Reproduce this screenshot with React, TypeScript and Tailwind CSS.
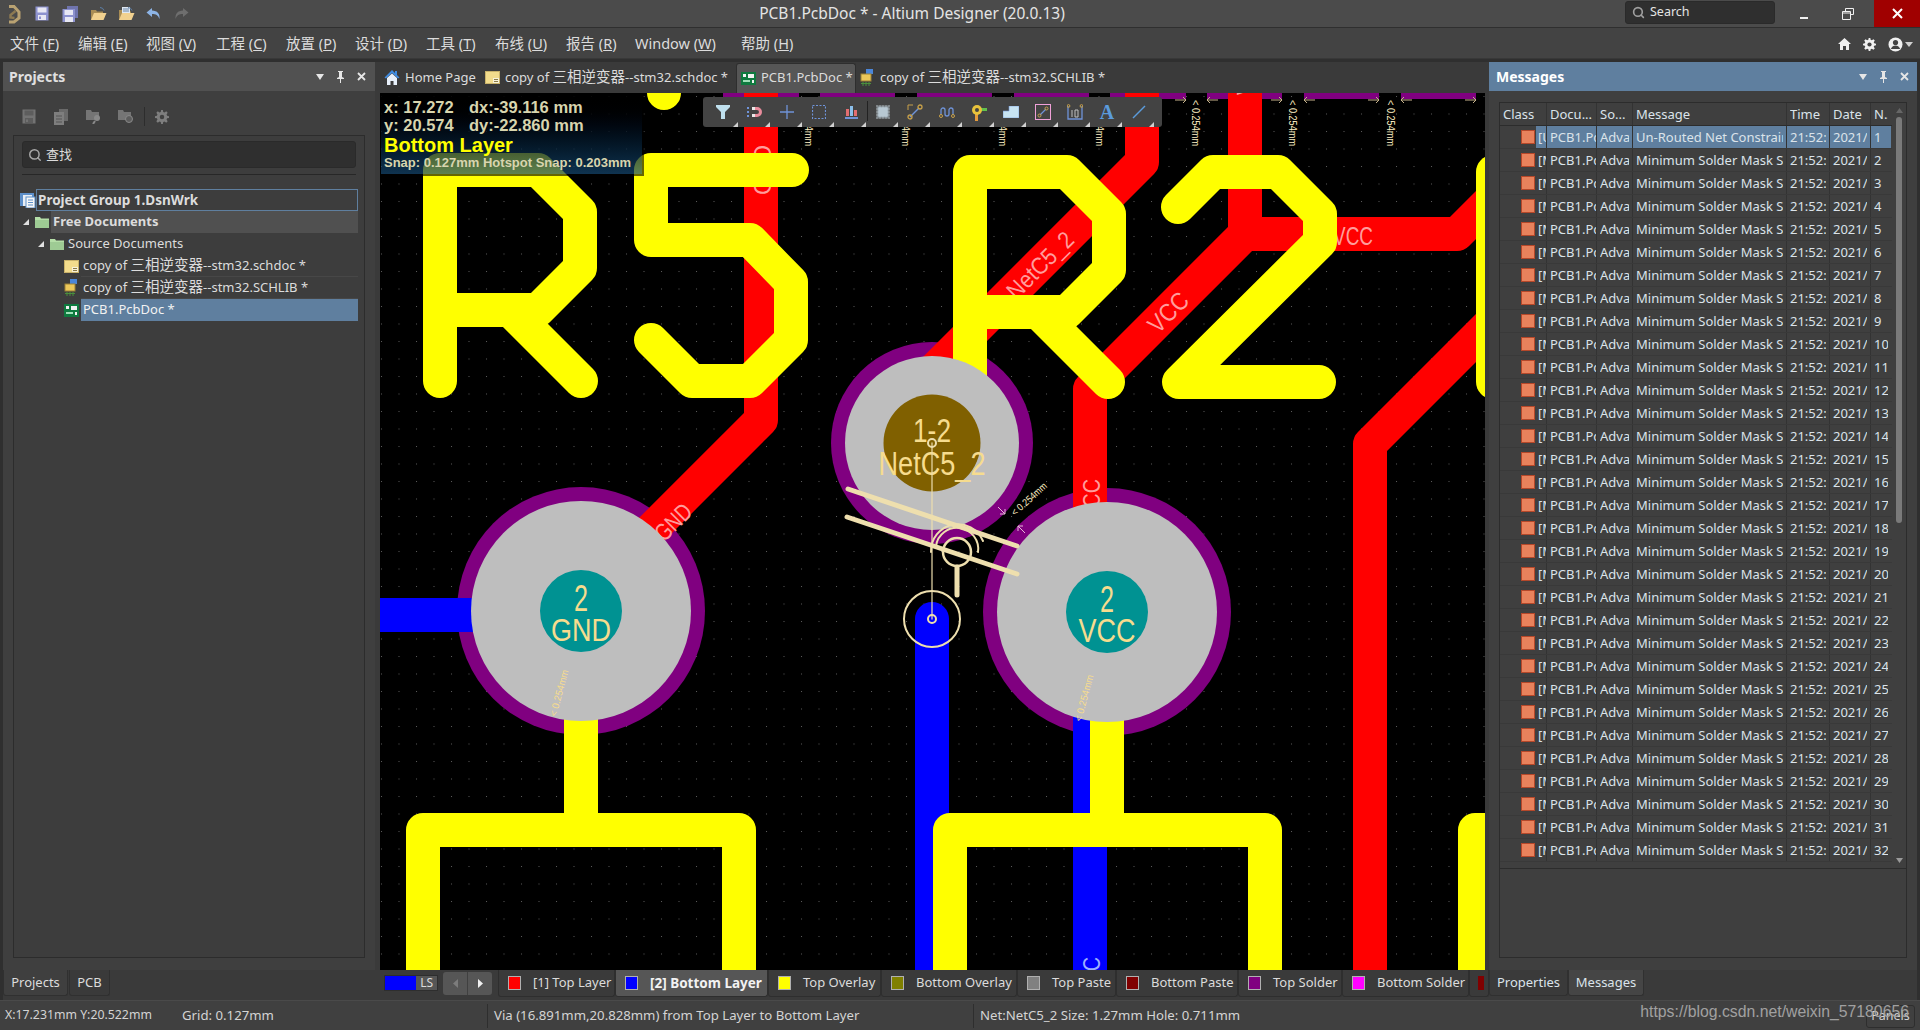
import { Search } from "lucide-react";
import type { ReactNode } from "react";

const UI_FONT = "font-['Noto_Sans','Noto_Sans_CJK_SC',sans-serif]";

function Floppy({ dim }: { dim?: boolean }) {
  const edge = dim ? "#8a8a8a" : "#8d92cf";
  const fill = dim ? "#6b6b6b" : "#e8e8f4";
  return (
    <svg width="14" height="15" viewBox="0 0 14 15">
      <rect x="0.5" y="0.5" width="13" height="14" fill={edge} />
      <rect x="2.5" y="1.5" width="9" height="5" fill={fill} />
      <rect x="3" y="9" width="8" height="5" fill={fill} />
      <rect x="4" y="10.5" width="2" height="2.5" fill={edge} />
    </svg>
  );
}

function FloppyStack() {
  return (
    <svg width="16" height="16" viewBox="0 0 16 16">
      <rect x="5" y="0" width="11" height="12" fill="#6f74ad" />
      <rect x="0.5" y="3" width="12.5" height="13" fill="#8d92cf" />
      <rect x="2.5" y="4" width="8.5" height="5" fill="#e8e8f4" />
      <rect x="3" y="11" width="8" height="5" fill="#e8e8f4" />
    </svg>
  );
}

function OpenFolder({ doc }: { doc?: boolean }) {
  return (
    <svg width="17" height="16" viewBox="0 0 17 16">
      <path d="M1 4h5l1 1.500h6V14H1z" fill="#a98d55" />
      {doc && <rect x="4" y="1" width="8" height="8" fill="#dfe8f2" />}
      {doc && <path d="M5 3h6M5 5h6" stroke="#6d87a8" />}
      <path d="M1 14l3-7h12.500l-3 7z" fill="#f1d18f" />
      <path d="M10 1.500q3 0 4 3" stroke="#5c7fa8" fill="none" />
    </svg>
  );
}

function HomeIcon() {
  return (
    <svg width="16" height="17" viewBox="0 0 16 17">
      <path d="M8 1L0.500 8.500 2 9.500 8 4l6 5.500 1.500-1z" fill="#3f8be0" />
      <path d="M3 9l5-4.500L13 9v7H9.500v-4h-3v4H3z" fill="#e8f0fa" />
      <rect x="11" y="2" width="2" height="4" fill="#3f8be0" />
    </svg>
  );
}

function SchDocIcon() {
  return (
    <svg width="15" height="13" viewBox="0 0 15 13">
      <rect x="0.500" y="0.500" width="14" height="12" fill="#f3dc8c" stroke="#c9b26a" />
      <rect x="8" y="7" width="6" height="5" fill="#f8f2d8" />
      <path d="M9 8.500h4M9 10.500h4" stroke="#8a7a48" />
    </svg>
  );
}

function SchLibIcon() {
  return (
    <svg width="15" height="18" viewBox="0 0 15 18">
      <rect x="6" y="0" width="7" height="5" fill="#4b86d8" />
      <rect x="1" y="5" width="10" height="7" fill="#ecc85a" stroke="#9c8236" />
      <path d="M3 13v4M6 13v4M9 13v4M1 14.500h10" stroke="#4a8f3c" />
    </svg>
  );
}

function PcbIcon() {
  return (
    <svg width="15" height="13" viewBox="0 0 15 13">
      <rect x="0" y="0" width="15" height="13" fill="#0f7a3f" />
      <rect x="2" y="2" width="3" height="3" fill="#f2f2f2" />
      <rect x="7" y="2" width="6" height="4" fill="#f2f2f2" />
      <rect x="2" y="8" width="7" height="2" fill="#9fe0b8" />
      <rect x="11" y="8" width="2" height="3" fill="#f2f2f2" />
    </svg>
  );
}

function FolderIcon() {
  return (
    <svg width="14" height="12" viewBox="0 0 14 12">
      <path d="M0 1h5l1 1.500h8V12H0z" fill="#b5dfa8" />
      <path d="M0 4h14v8H0z" fill="#9ecb94" />
    </svg>
  );
}

function GroupIcon() {
  return (
    <svg width="16" height="16" viewBox="0 0 16 16">
      <rect x="0" y="1" width="14" height="13" fill="#5d8fc9" />
      <rect x="3" y="3" width="9" height="11" fill="#e9eef5" />
      <rect x="6" y="5" width="9" height="11" fill="#f7f7f7" stroke="#5d8fc9" />
      <path d="M8 8h5M8 10.500h5M8 13h5" stroke="#5d8fc9" />
    </svg>
  );
}

function PinIcon() {
  return (
    <svg width="9" height="12" viewBox="0 0 9 12">
      <path d="M2 0h5v1H6v5l2 1v1H5v4H4V8H1V7l2-1V1H2z" fill="#e6e6e6" />
    </svg>
  );
}

function PanelButtons() {
  return (
    <div className="flex items-center gap-[12px] text-[#e6e6e6]">
      <svg width="8" height="6" viewBox="0 0 8 6">
        <path d="M0 0h8L4 6z" fill="#e6e6e6" />
      </svg>
      <PinIcon />
      <svg width="9" height="9" viewBox="0 0 9 9">
        <path d="M1 1l7 7M8 1l-7 7" stroke="#e6e6e6" strokeWidth="1.800" />
      </svg>
    </div>
  );
}

function GearIcon({ size, color }: { size: number; color: string }) {
  return (
    <svg width={size} height={size} viewBox="0 0 16 16">
      <path
        d="M7 0h2l.4 2.200 1.500.6L12.800 1.500l1.700 1.700-1.300 1.900.6 1.500L16 7v2l-2.200.4-.6 1.500 1.300 1.900-1.700 1.700-1.900-1.300-1.500.6L9 16H7l-.4-2.200-1.500-.6-1.900 1.300-1.700-1.700 1.300-1.900-.6-1.500L0 9V7l2.200-.4.6-1.500L1.500 3.200l1.700-1.700 1.900 1.300 1.500-.6z"
        fill={color}
      />
      <circle cx="8" cy="8" r="2.600" fill="#434343" />
    </svg>
  );
}

// the CJK part of a file name renders a little larger than the latin part
function Zh({ children }: { children: string }) {
  return <span className="text-[14.500px] leading-none">{children}</span>;
}

const MENU = [
  { zh: "文件", key: "F", cls: "w-[68px]" },
  { zh: "编辑", key: "E", cls: "w-[68px]" },
  { zh: "视图", key: "V", cls: "w-[70px]" },
  { zh: "工程", key: "C", cls: "w-[70px]" },
  { zh: "放置", key: "P", cls: "w-[69px]" },
  { zh: "设计", key: "D", cls: "w-[71px]" },
  { zh: "工具", key: "T", cls: "w-[69px]" },
  { zh: "布线", key: "U", cls: "w-[71px]" },
  { zh: "报告", key: "R", cls: "w-[69px]" },
  { zh: "Window", key: "W", cls: "w-[106px]" },
  { zh: "帮助", key: "H", cls: "w-[70px]" },
];

function TitleBar() {
  return (
    <div className="relative flex h-[28px] items-center border-b border-[#2f2f2f] bg-[#4b4b4b] text-[#e4e4e4]">
      <div className="flex items-center">
        <div className="flex w-[28px] justify-center">
          <svg width="14" height="20" viewBox="0 0 14 20" fill="none">
            <path d="M2 2.500h5l5 5.500v6l-5 4H2" stroke="#b9a272" strokeWidth="3" />
            <path d="M8.500 7L3.500 11v2.500l4 .5" stroke="#8d7a52" strokeWidth="2.500" />
          </svg>
        </div>
        <div className="flex w-[28px] justify-center"><Floppy /></div>
        <div className="flex w-[28px] justify-center"><FloppyStack /></div>
        <div className="flex w-[28px] justify-center"><OpenFolder /></div>
        <div className="flex w-[28px] justify-center"><OpenFolder doc /></div>
        <div className="flex w-[27px] justify-center">
          <svg width="16" height="14" viewBox="0 0 16 14">
            <path d="M6 1L0.500 5.500 6 10V7c4 0 6 1 7.500 5 .5-5-2-8.500-7.500-8.500z" fill="#8db4e6" />
          </svg>
        </div>
        <div className="flex w-[28px] justify-center">
          <svg width="16" height="14" viewBox="0 0 16 14">
            <path d="M10 1l5.500 4.500L10 10V7c-4 0-6 1-7.500 5C2 7 4.500 3.500 10 3.500z" fill="#6e6e6e" />
          </svg>
        </div>
      </div>
      <span className="absolute left-0 right-[96px] text-center text-[15.500px]">
        PCB1.PcbDoc * - Altium Designer (20.0.13)
      </span>
      <div className="relative ml-auto flex h-[27px] items-center">
        <div className="mr-[4px] flex h-[23px] w-[150px] -translate-y-[1px] items-center gap-[5px] rounded-[3px] border border-[#2a2a2a] bg-[#2f2f2f] pl-[6px] text-[12.500px]">
          <Search size={13} strokeWidth={3} className="text-[#a0a0a0]" />
          Search
        </div>
        <div className="flex w-[49px] justify-center">
          <div className="mt-[8px] h-[2px] w-[8px] bg-[#f0f0f0]" />
        </div>
        <div className="flex w-[40px] justify-center">
          <svg width="12" height="12" viewBox="0 0 12 12">
            <path d="M3.500 3V.5h8v6H9M.5 3.500h8v8h-8zM.5 5h8" stroke="#f0f0f0" fill="none" />
          </svg>
        </div>
        <div className="ml-[6px] flex h-[27px] w-[46px] items-center justify-center bg-[#a00000]">
          <svg width="11" height="11" viewBox="0 0 11 11">
            <path d="M1 1l9 9M10 1l-9 9" stroke="#fff" strokeWidth="2" />
          </svg>
        </div>
      </div>
    </div>
  );
}

function MenuBar() {
  return (
    <div className="flex h-[31px] items-center border-b border-[#383838] bg-[#434343] pl-[10px] pt-[2px] text-[14.500px] text-[#dcdcdc]">
      {MENU.map((m) => (
        <span key={m.key} className={`${m.cls} whitespace-nowrap`}>
          {m.zh} (<u>{m.key}</u>)
        </span>
      ))}
      <div className="ml-auto flex items-center gap-[12px] pr-[7px]">
        <svg width="13" height="12" viewBox="0 0 13 12">
          <path d="M6.500 0L0 6h2v6h3V8h3v4h3V6h2z" fill="#f0f0f0" />
        </svg>
        <GearIcon size={13} color="#f0f0f0" />
        <div className="flex items-center gap-[2px]">
          <svg width="15" height="15" viewBox="0 0 15 15">
            <circle cx="7.500" cy="7.500" r="7" fill="#f0f0f0" />
            <circle cx="7.500" cy="5.500" r="2.600" fill="#434343" />
            <path d="M2.800 12c1-2.500 2.800-3.500 4.700-3.500s3.700 1 4.700 3.500" fill="#434343" />
          </svg>
          <svg width="8" height="5" viewBox="0 0 8 5">
            <path d="M0 0h8L4 5z" fill="#d0d0d0" />
          </svg>
        </div>
      </div>
    </div>
  );
}

function TreeRow({
  icon,
  arrow,
  indent,
  children,
  cls,
}: {
  icon: ReactNode;
  arrow?: boolean;
  indent: string;
  children: ReactNode;
  cls: string;
}) {
  return (
    <div className={`flex h-[22px] items-center ${indent}`}>
      <div className="flex w-[12px] justify-center">
        {arrow && (
          <svg width="6" height="6" viewBox="0 0 6 6">
            <path d="M6 0v6H0z" fill="#e0e0e0" />
          </svg>
        )}
      </div>
      <div className="flex w-[19px] justify-center">{icon}</div>
      <div className={`flex h-[22px] flex-1 items-center whitespace-nowrap pl-[2px] ${cls}`}>
        {children}
      </div>
    </div>
  );
}

function ProjectsPanel() {
  return (
    <div className="flex h-full w-[375px] flex-col pl-[3px] text-[13px] text-[#dcdcdc]">
      <div className="flex h-[29px] items-center justify-between bg-[#515151] pl-[6px] pr-[9px]">
        <span className="text-[14px] font-bold text-[#e0e0e0]">Projects</span>
        <PanelButtons />
      </div>
      <div className="flex flex-1 flex-col bg-[#3f3f3f] px-[10px] pb-[12px]">
        <div className="flex h-[44px] items-center pl-[9px] pt-[7px] opacity-70">
          <div className="flex w-[32px]"><Floppy dim /></div>
          <div className="flex w-[32px]">
            <svg width="14" height="16" viewBox="0 0 14 16">
              <rect x="5" y="0" width="9" height="12" fill="#7d7d7d" />
              <rect x="0" y="3" width="10" height="13" fill="#9a9a9a" />
              <path d="M2 7h6M2 10h6M2 13h6" stroke="#5c5c5c" />
            </svg>
          </div>
          <div className="flex w-[32px]">
            <svg width="16" height="15" viewBox="0 0 16 15">
              <path d="M0 1h5l1 2h7v8H0z" fill="#8c8c8c" />
              <circle cx="11" cy="9" r="3" fill="#a9a9a9" />
              <path d="M9 12l-2 3" stroke="#a9a9a9" strokeWidth="2" />
            </svg>
          </div>
          <div className="flex w-[26px]">
            <svg width="16" height="15" viewBox="0 0 16 15">
              <path d="M0 1h5l1 2h7v8H0z" fill="#8c8c8c" />
              <circle cx="11" cy="10" r="3.500" fill="#6b6b6b" stroke="#a9a9a9" />
            </svg>
          </div>
          <div className="mr-[10px] h-[19px] w-px bg-[#262626]" />
          <GearIcon size={14} color="#9a9a9a" />
        </div>
        <div className="flex flex-1 flex-col border border-[#2c2c2c] bg-[#3d3d3d] px-[8px] pt-[5px]">
          <div className="flex h-[27px] items-center gap-[4px] rounded-[3px] border border-[#2a2a2a] bg-[#2f2f2f] pl-[5px]">
            <Search size={14} strokeWidth={2.500} className="text-[#a8a8a8]" />
            查找
          </div>
          <div className="mt-[6px] h-px bg-[#272727]" />
          <div className="-ml-[8px] mt-[14px] flex w-[344px] flex-col">
            <div className="flex h-[22px] items-center pl-[6px]">
              <GroupIcon />
              <div className="flex h-[22px] flex-1 items-center border border-[#5f7f9f] pl-[1px] text-[13.500px] font-bold">
                Project Group 1.DsnWrk
              </div>
            </div>
            <TreeRow arrow indent="pl-[6px]" icon={<FolderIcon />} cls="bg-[#505050] font-bold">
              Free Documents
            </TreeRow>
            <TreeRow arrow indent="pl-[21px]" icon={<FolderIcon />} cls="">
              Source Documents
            </TreeRow>
            <TreeRow indent="pl-[36px]" icon={<SchDocIcon />} cls="border-b border-[#474747]">
              <span>copy of <Zh>三相逆变器</Zh>--stm32.schdoc *</span>
            </TreeRow>
            <TreeRow indent="pl-[36px]" icon={<SchLibIcon />} cls="border-b border-[#474747]">
              <span>copy of <Zh>三相逆变器</Zh>--stm32.SCHLIB *</span>
            </TreeRow>
            <TreeRow indent="pl-[36px]" icon={<PcbIcon />} cls="bg-[#5f7f9f] text-[#f2f2f2]">
              PCB1.PcbDoc *
            </TreeRow>
          </div>
        </div>
      </div>
      <div className="flex h-[30px] bg-[#3a3a3a]">
        <div className="flex h-[26px] w-[65px] items-center justify-center rounded-b-[3px] border border-t-0 border-[#303030] bg-[#3f3f3f]">
          Projects
        </div>
        <div className="ml-px flex h-[26px] w-[41px] items-center justify-center rounded-b-[3px] border border-t-0 border-[#303030]">
          PCB
        </div>
      </div>
    </div>
  );
}

function DocTabs() {
  return (
    <div className="flex h-[31px] items-center pl-[9px] text-[13px] text-[#dcdcdc]">
      <div className="flex w-[101px] items-center gap-[5px]"><HomeIcon />Home Page</div>
      <div className="flex w-[251px] items-center gap-[5px] whitespace-nowrap">
        <SchDocIcon /><span>copy of <Zh>三相逆变器</Zh>--stm32.schdoc *</span>
      </div>
      <div className="flex h-[30px] w-[120px] items-center gap-[5px] rounded-t-[3px] border border-b-0 border-[#2e2e2e] bg-[#565656] pl-[4px] whitespace-nowrap">
        <PcbIcon />PCB1.PcbDoc *
      </div>
      <div className="ml-[4px] flex items-center gap-[5px] whitespace-nowrap">
        <SchLibIcon /><span>copy of <Zh>三相逆变器</Zh>--stm32.SCHLIB *</span>
      </div>
    </div>
  );
}

// purple pad strips along the top edge of the board
const TOP_PADS = [
  [723, 799],
  [820, 895],
  [917, 992],
  [1014, 1089],
  [1110, 1186],
  [1207, 1282],
  [1304, 1379],
  [1401, 1476],
];

function Squeezed({
  x,
  y,
  w,
  size,
  fill,
  rotate,
  children,
}: {
  x: number;
  y: number;
  w: number;
  size: number;
  fill: string;
  rotate?: number;
  children: string;
}) {
  return (
    <text
      x={x}
      y={y}
      fontSize={size}
      fill={fill}
      textAnchor="middle"
      dominantBaseline="central"
      textLength={w}
      lengthAdjust="spacingAndGlyphs"
      fontFamily="'Liberation Sans', sans-serif"
      transform={rotate ? `rotate(${rotate} ${x} ${y})` : undefined}
    >
      {children}
    </text>
  );
}

function Board() {
  const pink = "#ff9c9c";
  const cream = "#f6dc8e";
  const sel = "#eedfae";
  return (
    <svg viewBox="380 93 1105 877" className="absolute inset-0 h-full w-full">
      <defs>
        <pattern id="grid" x="381" y="96" width="17.500" height="17.500" patternUnits="userSpaceOnUse">
          <rect width="1" height="1" fill="#5c5c5c" />
        </pattern>
      </defs>
      <rect x="380" y="93" width="1105" height="877" fill="#000" />
      <rect x="380" y="93" width="1105" height="877" fill="url(#grid)" />

      {TOP_PADS.map(([s, e]) => (
        <rect key={s} x={s} y="93" width={e - s} height="6" fill="#800080" />
      ))}

      {/* pad masks */}
      <circle cx="581" cy="611" r="124" fill="#800080" />
      <circle cx="1107" cy="612" r="124" fill="#800080" />
      <circle cx="932" cy="443" r="101" fill="#800080" />

      {/* top layer */}
      <g fill="none" stroke="#ff0000" strokeWidth="34" strokeLinejoin="round" strokeLinecap="round">
        <path d="M761 80V420L640 541" />
        <path d="M1245 80V234L1090 389V520" />
        <path d="M1245 234H1457L1500 191" />
        <path d="M1142 80V162L932 372" />
        <path d="M1370 990V444L1500 314" />
      </g>
      <Squeezed x={673} y={522} w={42} size={24} fill={pink} rotate={-45}>GND</Squeezed>
      <Squeezed x={1168} y={312} w={46} size={25} fill={pink} rotate={-45}>VCC</Squeezed>
      <Squeezed x={1040} y={265} w={84} size={24} fill={pink} rotate={-45}>NetC5_2</Squeezed>
      <Squeezed x={1353} y={236} w={40} size={25} fill={pink}>VCC</Squeezed>
      <Squeezed x={1091} y={500} w={42} size={24} fill={pink} rotate={-90}>VCC</Squeezed>
      <Squeezed x={762} y={170} w={50} size={24} fill={pink} rotate={-90}>GND</Squeezed>
      <Squeezed x={1245} y={74} w={42} size={24} fill={pink} rotate={-90}>VCC</Squeezed>

      {/* bottom layer */}
      <g fill="none" stroke="#0000ff" strokeWidth="34" strokeLinejoin="round" strokeLinecap="round">
        <path d="M360 615H500" />
        <path d="M932 619V1000" />
        <path d="M1090 700V1000" />
      </g>
      <Squeezed x={1091} y={978} w={42} size={24} fill="#9db0ff" rotate={-90}>VCC</Squeezed>

      {/* overlay silkscreen */}
      <g fill="none" stroke="#ffff00" strokeWidth="34" strokeLinejoin="round" strokeLinecap="round">
        <circle cx="664" cy="93" r="8.500" strokeWidth="17" />
        <path d="M440 381V170H538L580 212V268L538 310H440M510 310L581 381" />
        <path d="M651 340L692 381H750L791 340V282L750 240H651V170H792" />
        <path d="M970 382V172H1067L1109 214V270L1067 312H970M1038 312L1108 382" />
        <path d="M1178 207L1213 172H1278L1320 214V242L1179 382H1319" />
        <path d="M1493 382V172" />
        <path d="M581 700V830M423 1000V830H739V1000" />
        <path d="M1107 700V830M950 1000V830H1265V1000" />
        <path d="M1520 830H1475V1000" />
      </g>

      {/* pads */}
      <circle cx="581" cy="611" r="110" fill="#bebebe" />
      <circle cx="1107" cy="612" r="110" fill="#bebebe" />
      <circle cx="932" cy="443" r="87" fill="#bebebe" />
      <circle cx="581" cy="611" r="41" fill="#009292" />
      <circle cx="1107" cy="612" r="41" fill="#009292" />
      <circle cx="932" cy="443" r="48.500" fill="#806000" />
      <Squeezed x={581} y={598} w={14} size={36} fill={cream}>2</Squeezed>
      <Squeezed x={581} y={630} w={60} size={32} fill={cream}>GND</Squeezed>
      <Squeezed x={1107} y={599} w={14} size={36} fill={cream}>2</Squeezed>
      <Squeezed x={1107} y={630} w={57} size={33} fill={cream}>VCC</Squeezed>
      <Squeezed x={932} y={430} w={38} size={34} fill={cream}>1-2</Squeezed>
      <Squeezed x={932} y={463} w={107} size={33} fill={cream}>NetC5_2</Squeezed>

      {/* rule check markers */}
      {TOP_PADS.map(([s, e]) => (
        <g key={s} fill="none" stroke="#c8b48c" strokeWidth="1">
          <path d={`M${s} 100H${s + 11}M${s + 3} 97L${s} 100L${s + 3} 103`} />
          <path d={`M${e - 11} 100H${e}M${e - 3} 97L${e} 100L${e - 3} 103`} />
        </g>
      ))}
      {[809, 906, 1003, 1100, 1196, 1293, 1391].map((x) => (
        <Squeezed key={x} x={x} y={123} w={46} size={11} fill="#fff0c4" rotate={90}>{"< 0.254mm"}</Squeezed>
      ))}
      <Squeezed x={559} y={693} w={48} size={10} fill={cream} rotate={-75}>{"< 0.254mm"}</Squeezed>
      <Squeezed x={1084} y={698} w={48} size={10} fill={cream} rotate={-75}>{"< 0.254mm"}</Squeezed>
      <Squeezed x={1029} y={499} w={44} size={10} fill="#fff0c4" rotate={-42}>{"< 0.254mm"}</Squeezed>
      <g fill="none" stroke="#e8b8d8" strokeWidth="1">
        <path d="M998 507L1005 514M1000 514h5v-5" />
        <path d="M1025 533L1018 526M1023 526h-5v5" />
      </g>

      {/* selected via under the cursor */}
      <g fill="none" stroke={sel} strokeLinecap="round">
        <path d="M932 443V619" strokeWidth="1.500" strokeOpacity="0.800" />
        <circle cx="932" cy="443" r="4" strokeWidth="2" />
        <circle cx="932" cy="619" r="28" strokeWidth="2" />
        <circle cx="932" cy="619" r="4" strokeWidth="2" />
        <path d="M848 489L1017 546" strokeWidth="5" />
        <path d="M847 517L1017 574" strokeWidth="5" />
        <circle cx="957" cy="552" r="14" strokeWidth="2.500" />
        <path d="M957 567V595" strokeWidth="5" />
        <path d="M936 546A21 21 0 0 1 978 552" strokeWidth="2" />
        <path d="M931 552A27 27 0 0 1 983 541" strokeWidth="2" />
      </g>
    </svg>
  );
}

function Hud() {
  return (
    <div className="absolute left-[1px] top-0 flex h-[81px] w-[261px] flex-col bg-gradient-to-b from-[#000000e6] to-[#164a74b0] pl-[3px] font-['Liberation_Sans',sans-serif] font-bold text-[#d8d5ae] shadow-[2px_2px_0_rgba(0,0,0,0.6)]">
      <div className="mt-[5px] flex h-[18px] items-center text-[16.500px] leading-none">
        <span className="w-[85px]">x: 17.272</span>dx:-39.116 mm
      </div>
      <div className="flex h-[18px] items-center text-[16.500px] leading-none">
        <span className="w-[85px]">y: 20.574</span>dy:-22.860 mm
      </div>
      <div className="h-[22px] text-[20px] leading-[22px] text-[#ffff00]">Bottom Layer</div>
      <div className="whitespace-nowrap text-[13px] leading-[14px]">Snap: 0.127mm Hotspot Snap: 0.203mm</div>
    </div>
  );
}

function Tool({ children, divider }: { children: ReactNode; divider?: boolean }) {
  return (
    <div className="relative flex h-[30px] w-[32px] items-center justify-center">
      {children}
      <svg width="5" height="5" viewBox="0 0 5 5" className="absolute bottom-0 right-[1px]">
        <path d="M5 0v5H0z" fill="#d0d0d0" />
      </svg>
      {divider && <div className="absolute -right-px top-[4px] h-[20px] w-px bg-[#222]" />}
    </div>
  );
}

function PcbToolbar() {
  const blue = "#6f93d8";
  const gold = "#c7a04a";
  return (
    <div className="absolute left-[323px] top-[4px] flex h-[30px] w-[459px] rounded-[3px] bg-[#434343] pl-[4px]">
      <Tool>
        <svg width="14" height="14" viewBox="0 0 14 14">
          <path d="M0 0h14v2L9 7v7H5V7L0 2z" fill="#bfe0ee" />
        </svg>
      </Tool>
      <Tool>
        <svg width="16" height="12" viewBox="0 0 16 12">
          <path d="M6 1h4a4.500 4.500 0 0 1 0 10H6V8h4a1.500 1.500 0 0 0 0-4H6z" fill="#e88c9c" />
          <rect x="5" y="1" width="3" height="3" fill="#e8e8e8" />
          <rect x="5" y="8" width="3" height="3" fill="#e8e8e8" />
          <rect x="0" y="1" width="2" height="2" fill="#6f93d8" />
          <rect x="0" y="5" width="2" height="2" fill="#6f93d8" />
          <rect x="0" y="9" width="2" height="2" fill="#6f93d8" />
        </svg>
      </Tool>
      <Tool>
        <svg width="14" height="14" viewBox="0 0 14 14">
          <path d="M7 0v14M0 7h14" stroke={blue} strokeWidth="1.300" />
        </svg>
      </Tool>
      <Tool>
        <svg width="14" height="14" viewBox="0 0 14 14">
          <rect x="0.500" y="0.500" width="13" height="13" fill="none" stroke={blue} strokeWidth="1.200" strokeDasharray="2 1.500" />
        </svg>
      </Tool>
      <Tool divider>
        <svg width="13" height="13" viewBox="0 0 13 13">
          <rect x="1" y="3" width="3" height="7" fill="#e26d70" />
          <rect x="5" y="0" width="3" height="10" fill="#8cc0ec" />
          <rect x="9" y="4" width="3" height="6" fill="#e26d70" />
          <rect x="0" y="11" width="13" height="2" fill={blue} />
        </svg>
      </Tool>
      <Tool>
        <svg width="14" height="14" viewBox="0 0 14 14">
          <rect x="2" y="2" width="10" height="10" fill="#c8d4dc" stroke="#8a9aa4" />
          <path d="M1 0v14M4 0v14M7 0v14M10 0v14M13 0v14M0 1h14M0 4h14M0 7h14M0 10h14M0 13h14" stroke="#c8d4dc" strokeOpacity="0.500" />
          <rect x="3" y="3" width="8" height="8" fill="#b8c8d2" />
        </svg>
      </Tool>
      <Tool>
        <svg width="16" height="16" viewBox="0 0 16 16">
          <path d="M1 6V1h5" fill="none" stroke={gold} />
          <path d="M3 13L12 4" stroke={blue} strokeWidth="1.500" />
          <circle cx="3" cy="13" r="2" fill="none" stroke={gold} strokeWidth="1.300" />
          <circle cx="13" cy="3" r="2" fill="none" stroke={gold} strokeWidth="1.300" />
        </svg>
      </Tool>
      <Tool>
        <svg width="16" height="12" viewBox="0 0 16 12">
          <path d="M2 9V4a2 2 0 0 1 4 0v4a2 2 0 0 0 4 0V4a2 2 0 0 1 4 0v5" fill="none" stroke={blue} strokeWidth="1.300" />
          <circle cx="2" cy="10" r="1.500" fill="none" stroke={gold} />
          <circle cx="14" cy="10" r="1.500" fill="none" stroke={gold} />
        </svg>
      </Tool>
      <Tool>
        <svg width="16" height="17" viewBox="0 0 16 17">
          <rect x="10" y="4" width="6" height="3" fill="#62c04c" />
          <rect x="4" y="10" width="3" height="7" fill="#e69a3c" />
          <circle cx="6" cy="6" r="5" fill="#e8c23c" />
          <circle cx="6" cy="6" r="2" fill="#434343" />
        </svg>
      </Tool>
      <Tool>
        <svg width="16" height="12" viewBox="0 0 16 12">
          <path d="M0 5h6V0h10v12H0z" fill="#c8e4f2" stroke="#6f93d8" strokeWidth="0.600" />
        </svg>
      </Tool>
      <Tool>
        <svg width="16" height="16" viewBox="0 0 16 16">
          <rect x="0.500" y="0.500" width="15" height="15" fill="none" stroke="#f0a0d8" />
          <path d="M5 11l6-6" stroke={blue} strokeWidth="1.300" />
          <circle cx="4.500" cy="11.500" r="1.500" fill="none" stroke={gold} />
          <circle cx="11.500" cy="4.500" r="1.500" fill="none" stroke={gold} />
        </svg>
      </Tool>
      <Tool>
        <svg width="16" height="16" viewBox="0 0 16 16">
          <path d="M1 2v13h14V2" fill="none" stroke={blue} strokeWidth="1.300" />
          <circle cx="1.500" cy="2" r="1.400" fill="none" stroke={gold} />
          <circle cx="14.500" cy="2" r="1.400" fill="none" stroke={gold} />
          <path d="M5 6v7M8 6h3v7H8z" fill="none" stroke="#c0c0c0" />
        </svg>
      </Tool>
      <Tool>
        <span className="font-['Liberation_Serif',serif] text-[20px] font-bold leading-none text-[#5b9bdc]">A</span>
      </Tool>
      <Tool>
        <svg width="14" height="14" viewBox="0 0 14 14">
          <path d="M1 13L13 1" stroke="#5b9bdc" strokeWidth="1.500" />
        </svg>
      </Tool>
    </div>
  );
}

const LAYERS = [
  { name: "[1] Top Layer", color: "#ff0000", cls: "w-[117px]" },
  { name: "[2] Bottom Layer", color: "#0000ff", cls: "w-[153px] bg-[#565656] text-[13.500px] font-bold text-[#f2f2f2]" },
  { name: "Top Overlay", color: "#ffff00", cls: "w-[113px]" },
  { name: "Bottom Overlay", color: "#808000", cls: "w-[136px]" },
  { name: "Top Paste", color: "#808080", cls: "w-[99px]" },
  { name: "Bottom Paste", color: "#800000", cls: "w-[122px]" },
  { name: "Top Solder", color: "#800080", cls: "w-[104px]" },
  { name: "Bottom Solder", color: "#ff00ff", cls: "w-[127px]" },
];

function LayerBar() {
  return (
    <div className="flex h-[30px] items-start overflow-hidden bg-[#3a3a3a] pl-[9px] text-[13px] text-[#dcdcdc]">
      <div className="mt-[5px] flex h-[16px] w-[56px] border border-[#2e2e2e]">
        <div className="w-[31px] bg-[#0000ff]" />
        <div className="flex flex-1 items-center justify-center bg-[#565656] text-[12px]">LS</div>
      </div>
      <div className="ml-[5px] mt-[2px] flex h-[23px] w-[50px] rounded-[3px] bg-[#565656]">
        <div className="flex flex-1 items-center justify-center border-r border-[#404040]">
          <svg width="5" height="9" viewBox="0 0 5 9"><path d="M5 0v9L0 4.500z" fill="#7c7c7c" /></svg>
        </div>
        <div className="flex flex-1 items-center justify-center">
          <svg width="5" height="9" viewBox="0 0 5 9"><path d="M0 0v9l5-4.500z" fill="#f0f0f0" /></svg>
        </div>
      </div>
      <div className="ml-[6px] flex">
        {LAYERS.map((l) => (
          <div
            key={l.name}
            className={`flex h-[27px] items-center gap-[12px] whitespace-nowrap rounded-b-[3px] border border-t-0 border-[#2e2e2e] pl-[9px] ${l.cls}`}
          >
            <div className="h-[14px] w-[13px] shrink-0 border border-[#b0b0b0]" style={{ background: l.color }} />
            {l.name}
          </div>
        ))}
        <div className="flex h-[27px] w-[20px] items-center rounded-b-[3px] border border-t-0 border-[#2e2e2e] pl-[8px]">
          <div className="h-[14px] w-[6px] bg-[#800000]" />
        </div>
      </div>
    </div>
  );
}

function Cell({ cls, tight, children }: { cls?: string; tight?: boolean; children?: ReactNode }) {
  return (
    <div className={`border-r border-[#333] pl-[3px] ${tight ? "pr-0" : "pr-[3px]"} ${cls ?? ""}`}>
      <div className="overflow-hidden whitespace-nowrap">{children}</div>
    </div>
  );
}

const MESSAGE_ROWS = Array.from({ length: 32 }, (_, i) => i + 1);
const COLUMNS = "grid grid-cols-[47px_50px_36px_154px_43px_41px_20px]";

function MessagesPanel() {
  return (
    <div className="flex h-full w-[431px] flex-col pr-[3px] text-[13px] text-[#dbe3ea]">
      <div className="flex h-[29px] items-center justify-between bg-[#5f7f9f] pl-[7px] pr-[8px]">
        <span className="text-[14px] font-bold text-white">Messages</span>
        <PanelButtons />
      </div>
      <div className="flex flex-1 flex-col bg-[#3f3f3f] pb-[12px] pl-[10px] pr-[10px] pt-[11px]">
        <div className="flex h-[767px] border border-[#2c2c2c]">
          <div className="flex w-[392px] flex-col">
            <div className={`${COLUMNS} h-[23px] items-center border-b border-[#2c2c2c]`}>
              <Cell cls="h-full leading-[22px]">Class</Cell>
              <Cell cls="h-full leading-[22px]">Docu...</Cell>
              <Cell cls="h-full leading-[22px]">So...</Cell>
              <Cell cls="h-full leading-[22px]">Message</Cell>
              <Cell cls="h-full leading-[22px]">Time</Cell>
              <Cell cls="h-full leading-[22px]">Date</Cell>
              <Cell cls="h-full border-r-0 leading-[22px]">N...</Cell>
            </div>
            {MESSAGE_ROWS.map((n) => (
              <div key={n} className={`${COLUMNS} h-[23px] border-b border-[#393939] leading-[22px]`}>
                <div className="flex overflow-hidden border-r border-[#333]">
                  <div className="ml-[21px] mr-[1px] mt-[4px] h-[14px] w-[14px] shrink-0 border border-[#b5482a] bg-[#e8825c]" />
                  <span className={`flex-1 overflow-hidden whitespace-nowrap pl-[2px] ${n === 1 ? "bg-[#5f7f9f]" : ""}`}>
                    {n === 1 ? "[Un-Routed" : "[Minimum"}
                  </span>
                </div>
                <Cell tight cls={n === 1 ? "bg-[#5f7f9f]" : ""}>PCB1.PcbDoc</Cell>
                <Cell cls={n === 1 ? "bg-[#5f7f9f]" : ""}>Advanced</Cell>
                <Cell cls={n === 1 ? "bg-[#5f7f9f]" : ""}>
                  {n === 1 ? "Un-Routed Net Constraint" : "Minimum Solder Mask Sliver"}
                </Cell>
                <Cell cls={n === 1 ? "bg-[#5f7f9f]" : ""}>21:52:</Cell>
                <Cell cls={n === 1 ? "bg-[#5f7f9f]" : ""}>2021/</Cell>
                <Cell cls={n === 1 ? "border-r-0 bg-[#5f7f9f]" : "border-r-0"}>{n}</Cell>
              </div>
            ))}
          </div>
          <div className="flex flex-1 flex-col items-center pt-[5px]">
            <svg width="7" height="5" viewBox="0 0 7 5"><path d="M3.500 0L7 5H0z" fill="#666" /></svg>
            <div className="mt-[4px] h-[406px] w-[6px] rounded-[3px] bg-[#7a7a7a]" />
            <div className="flex-1" />
            <svg width="7" height="5" viewBox="0 0 7 5" className="mb-[5px]"><path d="M0 0h7L3.500 5z" fill="#9a9a9a" /></svg>
          </div>
        </div>
        <div className="flex-1 border border-t-0 border-[#2c2c2c]" />
      </div>
      <div className="flex h-[30px] bg-[#3a3a3a]">
        <div className="flex h-[26px] w-[79px] items-center justify-center rounded-b-[3px] border border-t-0 border-[#303030]">
          Properties
        </div>
        <div className="flex h-[26px] w-[76px] items-center justify-center rounded-b-[3px] border border-t-0 border-[#303030] bg-[#454545]">
          Messages
        </div>
      </div>
    </div>
  );
}

function StatusBar() {
  return (
    <div className="relative flex h-[30px] items-center border-t border-[#4a4a4a] bg-[#404040] text-[13.200px] text-[#d4d4d4]">
      <span className="w-[182px] pl-[5px] text-[12.300px]">X:17.231mm Y:20.522mm</span>
      <span className="w-[305px]">Grid: 0.127mm</span>
      <span className="flex h-[24px] w-[486px] items-center border-l border-[#2e2e2e] pl-[6px]">
        Via (16.891mm,20.828mm) from Top Layer to Bottom Layer
      </span>
      <span className="flex h-[24px] items-center border-l border-[#2e2e2e] pl-[6px]">
        Net:NetC5_2 Size: 1.27mm Hole: 0.711mm
      </span>
      <div className="absolute bottom-[2px] right-[5px] flex h-[23px] w-[49px] items-center justify-center rounded-[3px] border border-[#2e2e2e] text-[12.500px]">
        Panels
      </div>
      <span className="absolute right-[11px] -top-[1px] font-['Liberation_Sans',sans-serif] text-[15.800px] text-[#a0a0a0]">
        https://blog.csdn.net/weixin_57180656
      </span>
    </div>
  );
}

export default function App() {
  return (
    <div className={`flex h-[1030px] w-[1920px] flex-col overflow-hidden bg-[#2f2f2f] ${UI_FONT}`}>
      <TitleBar />
      <MenuBar />
      <div className="mt-[3px] flex h-[938px]">
        <ProjectsPanel />
        <div className="flex h-full w-[1114px] flex-col bg-[#3a3a3a]">
          <DocTabs />
          <div className="relative ml-[5px] mr-[4px] flex-1 overflow-hidden bg-black">
            <Board />
            <Hud />
            <PcbToolbar />
          </div>
          <LayerBar />
        </div>
        <MessagesPanel />
      </div>
      <StatusBar />
    </div>
  );
}
